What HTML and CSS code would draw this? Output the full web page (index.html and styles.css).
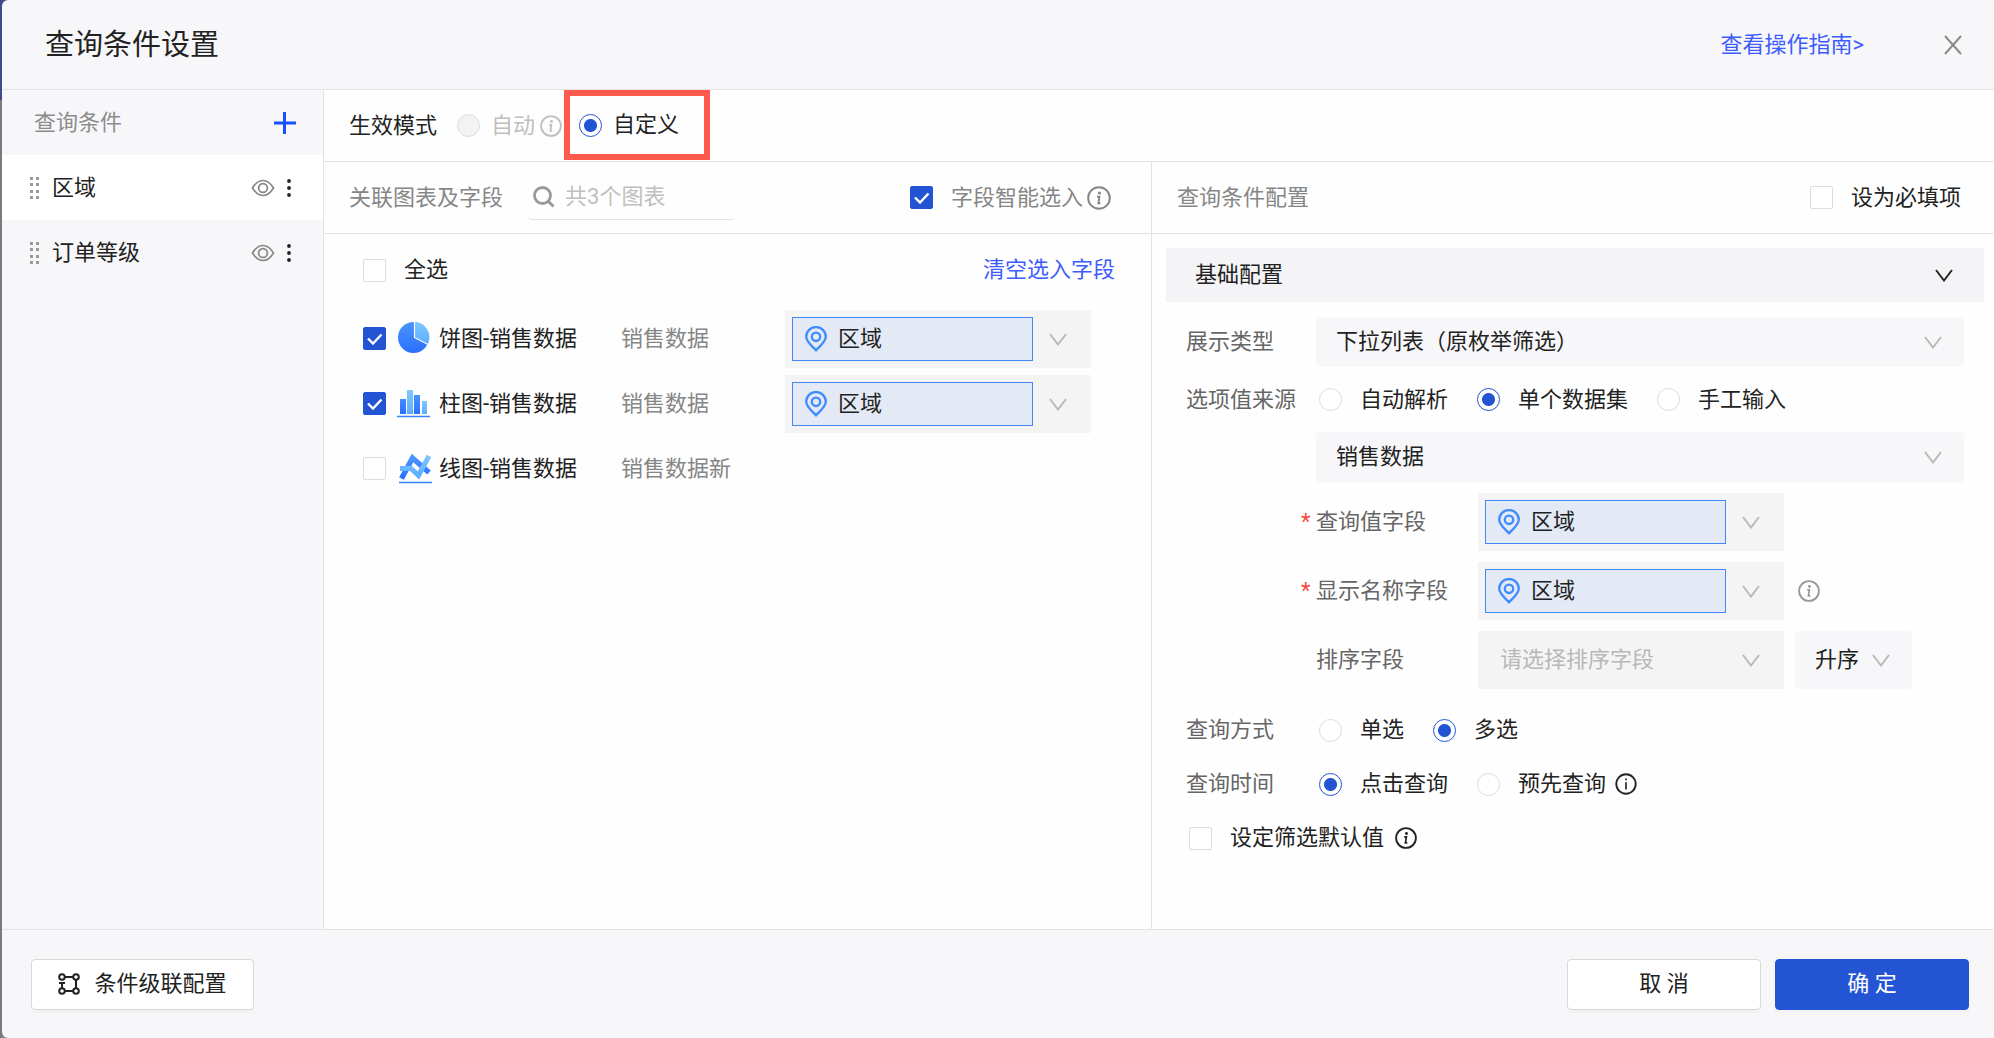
FILE: index.html
```
<!DOCTYPE html>
<html lang="zh-CN">
<head>
  <meta charset="UTF-8">
  <title>查询条件设置</title>
  <link rel="stylesheet" href="styles.css">
</head>
<body>
  <!-- 图标 -->
  <svg class="sprite" aria-hidden="true">
    <defs>
      <linearGradient id="blue-dark" x1="0" y1="0" x2="0" y2="1">
        <stop offset="0" stop-color="#4a94ff"/>
        <stop offset="1" stop-color="#2b70ff"/>
      </linearGradient>
      <linearGradient id="blue-light" x1="0" y1="0" x2="0" y2="1">
        <stop offset="0" stop-color="#7cc8ff"/>
        <stop offset="1" stop-color="#5eaeff"/>
      </linearGradient>
    </defs>
    <symbol id="i-chevron" viewBox="0 0 18 13">
      <path d="M1 1l8 10.500l8-10.500" fill="none" stroke="currentColor" stroke-width="1.900"/>
    </symbol>
    <symbol id="i-pin" viewBox="0 0 22 26">
      <path d="M11 24.300C7.500 20.500 1.200 16 1.200 10.600a9.800 9.600 0 0 1 19.600 0C20.800 16 14.500 20.500 11 24.300z" fill="none" stroke="currentColor" stroke-width="2.300"/>
      <circle cx="11" cy="10.800" r="4.200" fill="none" stroke="currentColor" stroke-width="2.300"/>
    </symbol>
    <symbol id="i-info" viewBox="0 0 24 24">
      <circle cx="12" cy="12" r="10.800" fill="none" stroke="currentColor" stroke-width="2"/>
      <circle cx="12.500" cy="7" r="1.600" fill="currentColor"/>
      <path d="M10 10.700h2.400l-1 6.600h2" fill="none" stroke="currentColor" stroke-width="1.900"/>
    </symbol>
    <symbol id="i-info-thin" viewBox="0 0 24 24">
      <circle cx="12" cy="12" r="10.600" fill="none" stroke="currentColor" stroke-width="2"/>
      <path d="M12 6v2M12 10v8" fill="none" stroke="currentColor" stroke-width="1.800"/>
    </symbol>
    <symbol id="i-eye" viewBox="0 0 24 18">
      <path d="M1.500 9C4.500 4 8 1.500 12 1.500S19.500 4 22.500 9C19.500 14 16 16.500 12 16.500S4.500 14 1.500 9z" fill="none" stroke="currentColor" stroke-width="1.700"/>
      <circle cx="12" cy="9" r="4.400" fill="none" stroke="currentColor" stroke-width="1.700"/>
    </symbol>
    <symbol id="i-more" viewBox="0 0 6 20">
      <circle cx="3" cy="3" r="1.900"/><circle cx="3" cy="10" r="1.900"/><circle cx="3" cy="17" r="1.900"/>
    </symbol>
    <symbol id="i-drag" viewBox="0 0 10 22">
      <path d="M0 0h3v3H0zM6 0h3v3H6zM0 6h3v3H0zM6 6h3v3H6zM0 13h3v3H0zM6 13h3v3H6zM0 19h3v3H0zM6 19h3v3H6z"/>
    </symbol>
  </svg>

  <div class="dialog">
    <header class="dialog-header">
      <h1>查询条件设置</h1>
      <a class="link" href="#guide">查看操作指南&gt;</a>
      <button class="icon-btn close" type="button" aria-label="关闭">
        <svg width="18" height="20" viewBox="0 0 18 20"><path d="M1 1l16 18M17 1L1 19" stroke="currentColor" stroke-width="1.900"/></svg>
      </button>
    </header>

    <div class="dialog-body">
      <aside class="sidebar">
        <div class="sidebar-title">
          <h2>查询条件</h2>
          <button class="icon-btn add" type="button" aria-label="添加">
            <svg width="22" height="22" viewBox="0 0 22 22"><path d="M10.500 0v22M0 11h22" stroke="currentColor" stroke-width="3"/></svg>
          </button>
        </div>
        <ul class="conditions">
          <li class="active">
            <svg class="drag" width="10" height="22"><use href="#i-drag"/></svg>
            <span>区域</span>
            <button class="icon-btn eye" type="button" aria-label="显示"><svg width="24" height="18"><use href="#i-eye"/></svg></button>
            <button class="icon-btn" type="button" aria-label="更多"><svg width="6" height="20"><use href="#i-more"/></svg></button>
          </li>
          <li>
            <svg class="drag" width="10" height="22"><use href="#i-drag"/></svg>
            <span>订单等级</span>
            <button class="icon-btn eye" type="button" aria-label="显示"><svg width="24" height="18"><use href="#i-eye"/></svg></button>
            <button class="icon-btn" type="button" aria-label="更多"><svg width="6" height="20"><use href="#i-more"/></svg></button>
          </li>
        </ul>
      </aside>

      <main class="main">
        <div class="mode">
          <span class="mode-label">生效模式</span>
          <label class="mode-auto"><input type="radio" name="mode" disabled>自动</label>
          <svg class="mode-info" width="22" height="22"><use href="#i-info"/></svg>
          <label class="mode-custom"><input type="radio" name="mode" checked>自定义</label>
        </div>

        <div class="panels">
          <section class="charts">
            <div class="panel-head">
              <h2>关联图表及字段</h2>
              <div class="search">
                <svg width="22" height="22" viewBox="0 0 22 22"><circle cx="9.500" cy="9.500" r="8" fill="none" stroke="currentColor" stroke-width="2.800"/><path d="M15 15l5.500 5.500" stroke="currentColor" stroke-width="3"/></svg>
                <input type="text" placeholder="共3个图表" aria-label="搜索图表">
              </div>
              <label class="smart"><input type="checkbox" checked>字段智能选入</label>
              <svg class="smart-info" width="24" height="24"><use href="#i-info"/></svg>
            </div>

            <div class="select-all">
              <label><input type="checkbox">全选</label>
              <a class="link" href="#clear">清空选入字段</a>
            </div>

            <ul class="chart-list">
              <li>
                <label class="chart-name">
                  <input type="checkbox" checked>
                  <svg width="34" height="34" viewBox="0 0 34 34">
                    <circle cx="15.500" cy="15.500" r="15.500" fill="url(#blue-dark)"/>
                    <path d="M16.500 0A15.500 15.500 0 0 1 30 22L16.500 15.500z" fill="url(#blue-light)"/>
                    <path d="M16.500 0v15.500l13.500 7" fill="none" stroke="#fff" stroke-width="1.200"/>
                  </svg>
                  饼图-销售数据
                </label>
                <span class="dataset">销售数据</span>
                <div class="field">
                  <svg class="pin" width="22" height="26"><use href="#i-pin"/></svg>
                  <select class="chip" aria-label="饼图字段"><option>区域</option></select>
                  <svg class="arrow" width="18" height="13"><use href="#i-chevron"/></svg>
                </div>
              </li>
              <li>
                <label class="chart-name">
                  <input type="checkbox" checked>
                  <svg width="34" height="34" viewBox="0 0 34 34">
                    <path d="M2 12h6v15H2zM16 8h6v19h-6z" fill="url(#blue-dark)"/>
                    <path d="M9 3h6v24H9z" fill="url(#blue-light)"/>
                    <path d="M24 14h5v13h-5z" fill="url(#blue-light)"/>
                    <path d="M-1 29.500h33" stroke="#3a82ff" stroke-width="1.400"/>
                  </svg>
                  柱图-销售数据
                </label>
                <span class="dataset">销售数据</span>
                <div class="field">
                  <svg class="pin" width="22" height="26"><use href="#i-pin"/></svg>
                  <select class="chip" aria-label="柱图字段"><option>区域</option></select>
                  <svg class="arrow" width="18" height="13"><use href="#i-chevron"/></svg>
                </div>
              </li>
              <li>
                <label class="chart-name">
                  <input type="checkbox">
                  <svg width="34" height="34" viewBox="0 0 34 34">
                    <path d="M3.500 26.500L14.500 6L31 20.500" fill="none" stroke="url(#blue-dark)" stroke-width="5.400"/>
                    <path d="M2 16.500h11l7.500 7L31 4" fill="none" stroke="url(#blue-light)" stroke-width="5"/>
                    <path d="M1 30.500h33" stroke="#3a82ff" stroke-width="1.600"/>
                  </svg>
                  线图-销售数据
                </label>
                <span class="dataset">销售数据新</span>
              </li>
            </ul>
          </section>

          <section class="config">
            <div class="panel-head">
              <h2>查询条件配置</h2>
              <label class="required-opt"><input type="checkbox">设为必填项</label>
            </div>

            <button class="collapse" type="button">
              基础配置
              <svg width="18" height="13"><use href="#i-chevron"/></svg>
            </button>

            <form class="form">
              <div class="row">
                <label class="row-label" for="show-type">展示类型</label>
                <div class="select">
                  <select id="show-type"><option>下拉列表（原枚举筛选）</option></select>
                  <svg class="arrow" width="18" height="13"><use href="#i-chevron"/></svg>
                </div>
              </div>
              <div class="row row-source">
                <span class="row-label">选项值来源</span>
                <div class="options">
                  <label><input type="radio" name="source">自动解析</label>
                  <label><input type="radio" name="source" checked>单个数据集</label>
                  <label><input type="radio" name="source">手工输入</label>
                </div>
              </div>
              <div class="row">
                <span class="row-label"></span>
                <div class="select">
                  <select aria-label="数据集"><option>销售数据</option></select>
                  <svg class="arrow" width="18" height="13"><use href="#i-chevron"/></svg>
                </div>
              </div>

              <div class="sub-row">
                <label class="sub-label must" for="value-field">查询值字段</label>
                <div class="field">
                  <svg class="pin" width="22" height="26"><use href="#i-pin"/></svg>
                  <select class="chip" id="value-field"><option>区域</option></select>
                  <svg class="arrow" width="18" height="13"><use href="#i-chevron"/></svg>
                </div>
              </div>
              <div class="sub-row">
                <label class="sub-label must" for="name-field">显示名称字段</label>
                <div class="field">
                  <svg class="pin" width="22" height="26"><use href="#i-pin"/></svg>
                  <select class="chip" id="name-field"><option>区域</option></select>
                  <svg class="arrow" width="18" height="13"><use href="#i-chevron"/></svg>
                </div>
                <svg class="name-info" width="22" height="22"><use href="#i-info"/></svg>
              </div>
              <div class="sub-row">
                <label class="sub-label" for="sort-field">排序字段</label>
                <div class="field">
                  <select class="empty" id="sort-field"><option>请选择排序字段</option></select>
                  <svg class="arrow" width="18" height="13"><use href="#i-chevron"/></svg>
                </div>
                <div class="select order">
                  <select aria-label="排序方式"><option>升序</option></select>
                  <svg class="arrow" width="18" height="13"><use href="#i-chevron"/></svg>
                </div>
              </div>

              <div class="query-opts">
                <div class="row">
                  <span class="row-label">查询方式</span>
                  <div class="options">
                    <label><input type="radio" name="way">单选</label>
                    <label><input type="radio" name="way" checked>多选</label>
                  </div>
                </div>
                <div class="row">
                  <span class="row-label">查询时间</span>
                  <div class="options">
                    <label><input type="radio" name="time" checked>点击查询</label>
                    <label><input type="radio" name="time">预先查询</label>
                  </div>
                  <svg class="time-info" width="22" height="22"><use href="#i-info-thin"/></svg>
                </div>
                <div class="row row-default">
                  <label><input type="checkbox">设定筛选默认值</label>
                  <svg width="22" height="22"><use href="#i-info"/></svg>
                </div>
              </div>
            </form>
          </section>
        </div>
      </main>
    </div>

    <footer class="dialog-footer">
      <button class="btn cascade" type="button">
        <svg width="22" height="22" viewBox="0 0 22 22">
          <g fill="none" stroke="currentColor" stroke-width="2">
            <circle cx="4" cy="4" r="2.800"/><circle cx="18" cy="4" r="2.800"/><circle cx="4" cy="18" r="2.800"/><circle cx="18" cy="18" r="2.800"/>
            <path d="M7 4h8M18 7v8M7 18h8M4 15v-4.500M1 10h6"/>
          </g>
        </svg>
        条件级联配置
      </button>
      <button class="btn cancel" type="button">取 消</button>
      <button class="btn primary" type="button">确 定</button>
    </footer>
  </div>
</body>
</html>
```

FILE: styles.css
```
* {
  box-sizing: border-box;
}

body {
  margin: 0;
  padding-left: 2px;
  background: linear-gradient(#3f4b8c 100px, #7a7a7c 100px);
  font-family: Roboto, "Noto Sans CJK SC", sans-serif;
  font-size: 22px;
  line-height: 32px;
  color: #222;
}

h1, h2, ul {
  margin: 0;
  padding: 0;
  font-size: 22px;
  font-weight: normal;
  list-style: none;
}

svg {
  display: block;
  flex: none;
  fill: currentColor;
}

.sprite {
  position: absolute;
  width: 0;
  height: 0;
}

button, input, select {
  font: inherit;
  color: inherit;
}

label {
  display: flex;
  align-items: center;
}

.link {
  color: #3d5cff;
  text-decoration: none;
}

.icon-btn {
  padding: 0;
  border: 0;
  background: none;
  cursor: pointer;
}

/* 单选框、复选框 */
input[type="radio"],
input[type="checkbox"] {
  appearance: none;
  flex: none;
  width: 23px;
  height: 23px;
  margin: 0 18px 0 0;
  border: 1px solid #dcdcdc;
  border-radius: 2px;
  background: #fff;
}

input[type="radio"] {
  border-radius: 50%;
}

input[type="radio"]:checked {
  border-color: #2254d3;
  background: radial-gradient(circle, #2254d3 6px, #fff 7px);
}

input[type="radio"]:disabled {
  background: #f3f3f3;
}

input[type="checkbox"]:checked {
  border-color: #2254d3;
  background: #2254d3 url("data:image/svg+xml,%3Csvg xmlns='http://www.w3.org/2000/svg' viewBox='0 0 21 21'%3E%3Cpath d='M4 10.500l5 5 8.500-9' fill='none' stroke='white' stroke-width='2.400'/%3E%3C/svg%3E");
}

/* 弹窗 */
.dialog {
  display: flex;
  flex-direction: column;
  min-height: 100vh;
  border-radius: 6px 0 0 6px;
  background: #f7f7f9;
}

.dialog-header {
  display: flex;
  align-items: center;
  height: 90px;
  padding: 0 32px 0 43px;
  border-bottom: 1px solid #e3e3e6;
}

.dialog-header h1 {
  margin-right: auto;
  font-size: 29px;
}

.close {
  margin-left: 80px;
  color: #888;
}

.dialog-body {
  display: flex;
  flex: 1;
}

/* 左侧条件列表 */
.sidebar {
  flex: none;
  width: 322px;
  border-right: 1px solid #e3e3e6;
}

.sidebar-title,
.conditions li {
  display: flex;
  align-items: center;
  height: 65px;
}

.sidebar-title {
  justify-content: space-between;
  padding: 0 27px 0 32px;
  color: #8c8c8c;
}

.add {
  color: #1550ff;
}

.conditions li {
  padding: 0 31px 0 28px;
}

.conditions .active {
  background: #fff;
}

.conditions span {
  flex: 1;
  margin-left: 12px;
}

.drag {
  color: #999;
}

.eye {
  margin-right: 11px;
  color: #888;
}

/* 右侧主体 */
.main {
  display: flex;
  flex: 1;
  flex-direction: column;
  background: #fefefe;
}

.mode,
.panel-head {
  display: flex;
  align-items: center;
  height: 72px;
  padding-left: 25px;
  border-bottom: 1px solid #e3e3e6;
}

.mode-label {
  width: 108px;
}

.mode input {
  margin-right: 11px;
}

.mode-auto {
  color: #bfbfbf;
}

.mode-info {
  margin-left: 5px;
  color: #bfbfbf;
}

.mode-custom {
  align-self: flex-start;
  height: 70px;
  margin-left: 2px;
  padding: 0 25px 0 9px;
  border: 6px solid #ff5a4b;
}

.panels {
  display: flex;
  flex: 1;
}

.charts {
  flex: none;
  width: 828px;
  border-right: 1px solid #e3e3e6;
}

.panel-head {
  color: #868686;
}

.search {
  display: flex;
  align-items: center;
  width: 207px;
  height: 44px;
  margin-left: 25px;
  padding-left: 5px;
  border-bottom: 1px solid #e3e3e6;
  border-radius: 4px;
  color: #999;
}

.search input {
  width: 160px;
  margin-left: 10px;
  padding: 0;
  border: 0;
  outline: 0;
  background: none;
}

.search input::placeholder {
  color: #bfbfbf;
}

.smart {
  margin-left: auto;
}

.smart-info {
  margin: 0 40px 0 4px;
}

.select-all {
  display: flex;
  align-items: center;
  justify-content: space-between;
  height: 72px;
  padding: 0 36px 0 39px;
}

.chart-list li {
  display: flex;
  align-items: center;
  height: 65px;
  padding-left: 39px;
}

.chart-name {
  width: 258px;
}

.chart-name input[type="checkbox"] {
  margin-right: 12px;
}

.chart-name svg {
  margin-right: 7px;
  overflow: visible;
}

.dataset {
  width: 164px;
  color: #868686;
}

/* 字段选择框 */
.field {
  position: relative;
  flex: none;
  width: 306px;
  height: 58px;
  padding: 7px;
  background: #f4f4f4;
}

.chip {
  appearance: none;
  display: block;
  width: 241px;
  height: 44px;
  padding: 0 0 0 45px;
  border: 1px solid #4189fb;
  border-radius: 0;
  background: #e3e9f5;
}

.pin {
  position: absolute;
  top: 16px;
  left: 20px;
  color: #3f8cff;
}

.arrow {
  position: absolute;
  top: 50%;
  right: 24px;
  margin-top: -6px;
  color: #b8b8b8;
  pointer-events: none;
}

.empty {
  appearance: none;
  width: 100%;
  height: 44px;
  padding: 0 0 0 15px;
  border: 0;
  background: none;
  color: #b8b8b8;
}

.select {
  position: relative;
  flex: 1;
  height: 50px;
  border-radius: 4px;
  background: #f7f7f9;
}

.select select {
  appearance: none;
  width: 100%;
  height: 100%;
  padding: 0 50px 0 20px;
  border: 0;
  background: none;
}

.select .arrow {
  right: 22px;
}

.order {
  flex: none;
  width: 117px;
  height: 58px;
  margin-left: 11px;
}

/* 查询条件配置 */
.config {
  flex: 1;
}

.required-opt {
  margin: 0 33px 0 auto;
  color: #222;
}

.collapse {
  display: flex;
  align-items: center;
  justify-content: space-between;
  width: calc(100% - 24px);
  height: 54px;
  margin: 14px 10px 0 14px;
  padding: 0 31px 0 29px;
  border: 0;
  background: #f4f4f6;
}

.form {
  padding: 15px 30px 0 34px;
}

.row {
  display: flex;
  align-items: center;
}

.row-label {
  width: 130px;
  color: #666;
}

.row-source {
  height: 65px;
}

.options {
  display: flex;
  gap: 29px;
  padding-left: 3px;
}

.sub-row {
  display: flex;
  align-items: center;
  margin-top: 11px;
  padding-left: 130px;
}

.sub-label {
  width: 162px;
  color: #666;
}

.must::before {
  content: "*";
  width: 15px;
  margin-left: -15px;
  color: #f5483b;
}

.name-info {
  margin-left: 14px;
  color: #999;
}

.query-opts {
  padding-top: 14px;
}

.query-opts .row {
  height: 54px;
}

.time-info {
  margin-left: 9px;
}

.row-default {
  gap: 11px;
  padding-left: 3px;
}

/* 底部按钮 */
.dialog-footer {
  display: flex;
  align-items: center;
  gap: 14px;
  height: 109px;
  padding: 0 25px 0 29px;
  border-top: 1px solid #e3e3e6;
}

.btn {
  width: 194px;
  height: 51px;
  padding: 0;
  border: 1px solid #d9d9d9;
  border-radius: 4px;
  background: #fff;
  box-shadow: 0 3px 0 rgba(0, 0, 0, 0.02);
  cursor: pointer;
}

.cascade {
  display: flex;
  align-items: center;
  justify-content: center;
  gap: 14px;
  width: 223px;
  margin-right: auto;
}

.primary {
  border-color: #2254d3;
  background: #2254d3;
  color: #fff;
}
```
